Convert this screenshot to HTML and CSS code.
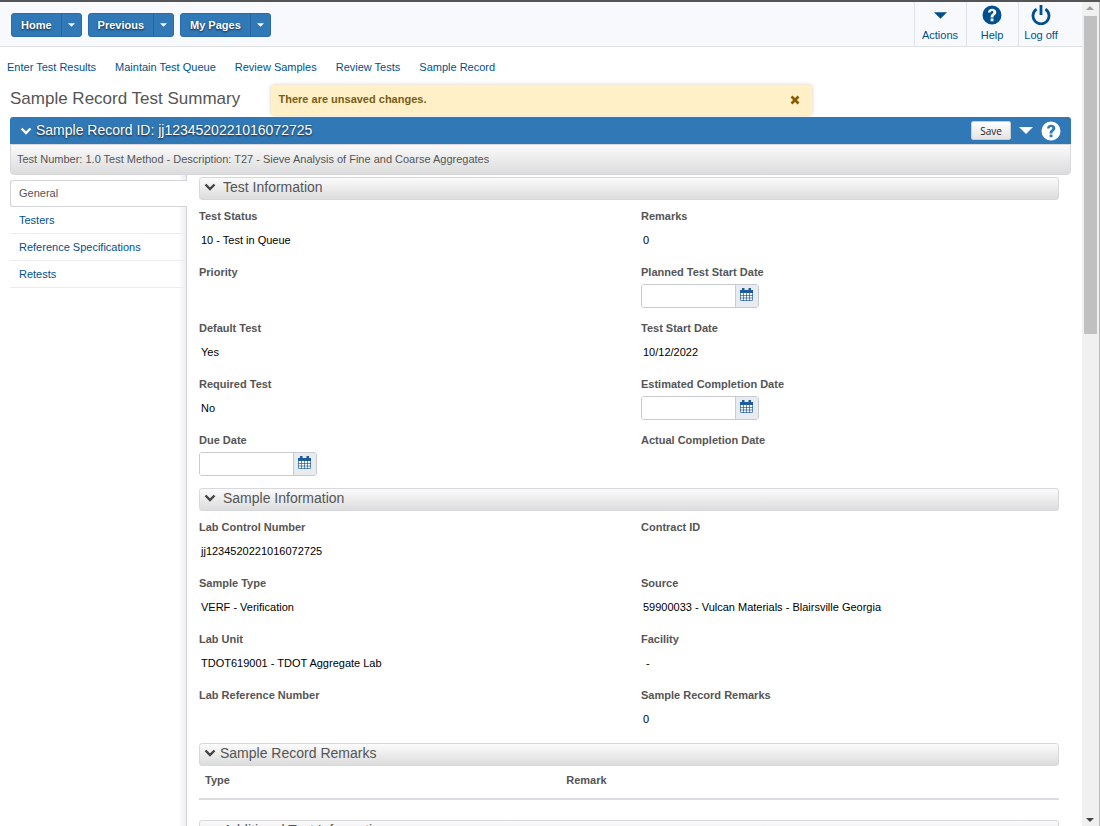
FILE: index.html
```
<!DOCTYPE html>
<html lang="en">

<head>
    <meta charset="utf-8">
    <meta name="viewport" content="width=device-width, initial-scale=1">
    <title>Sample Record Test Summary</title>
    <link rel="stylesheet" href="styles.css">
</head>

<body>
    <svg class="symbols">
        <symbol id="caret" viewBox="0 0 12 6">
            <path d="M0 0h12L6 6z" />
        </symbol>
        <symbol id="chevron" viewBox="0 0 12 8">
            <path d="M1.500 1.500l4.500 4.500 4.500-4.500" fill="none" stroke="currentColor" stroke-width="2.4" />
        </symbol>
        <symbol id="question" viewBox="0 0 20 20">
            <path fill-rule="evenodd" d="M10 .5a9.500 9.500 0 1 0 0 19a9.500 9.500 0 1 0 0-19zM8.600 13.500h2.900v2.800H8.600zM6 7.400C6.200 4.900 7.700 3.700 10.100 3.700c2.500 0 4.200 1.300 4.200 3.500 0 1.500-.8 2.300-1.800 3-.8.6-1 .9-1 2.200H8.600c0-2 .5-2.700 1.500-3.500.8-.6 1.200-.9 1.200-1.600 0-.7-.5-1.200-1.300-1.200-.9 0-1.300.5-1.400 1.500z" />
        </symbol>
        <symbol id="power" viewBox="0 0 20 20">
            <path d="M5.600 4.200a8 8 0 1 0 8.800 0M10 0v10" fill="none" stroke="currentColor" stroke-width="2.800" />
        </symbol>
        <symbol id="calendar" viewBox="0 0 13 13">
            <path fill="#fff" d="M0 4h13v9H0z" />
            <path d="M0 2h2V0h2.500v2h4V0H11v2h2v3H0z" />
            <path d="M.5 4v8.500h12V4M3.500 4v9M6.500 4v9M9.500 4v9M0 7.500h13M0 10h13" fill="none" stroke="currentColor" stroke-width=".7" />
        </symbol>
    </svg>

    <div class="page">
        <header class="topbar">
            <div class="menus">
                <div class="split-button">
                    <button type="button">Home</button>
                    <button type="button" class="drop" aria-label="Home menu"><svg><use href="#caret" /></svg></button>
                </div>
                <div class="split-button">
                    <button type="button">Previous</button>
                    <button type="button" class="drop" aria-label="Previous menu"><svg><use href="#caret" /></svg></button>
                </div>
                <div class="split-button">
                    <button type="button">My Pages</button>
                    <button type="button" class="drop" aria-label="My Pages menu"><svg><use href="#caret" /></svg></button>
                </div>
            </div>
            <div class="tools">
                <a href="#"><svg class="tool-caret"><use href="#caret" /></svg>Actions</a>
                <a href="#"><svg><use href="#question" /></svg>Help</a>
                <a href="#"><svg><use href="#power" /></svg>Log off</a>
            </div>
        </header>

        <nav class="quick-links">
            <a href="#">Enter Test Results</a>
            <a href="#">Maintain Test Queue</a>
            <a href="#">Review Samples</a>
            <a href="#">Review Tests</a>
            <a href="#">Sample Record</a>
        </nav>

        <div class="title-row">
            <h1>Sample Record Test Summary</h1>
            <div class="alert" role="alert">
                <span>There are unsaved changes.</span>
                <button type="button" aria-label="Close">
                    <svg viewBox="0 0 10 10"><path d="M1.500 1.500l7 7M8.500 1.500l-7 7" stroke="currentColor" stroke-width="2.600" /></svg>
                </button>
            </div>
        </div>

        <div class="record">
            <div class="record-head">
                <svg class="chevron"><use href="#chevron" /></svg>
                <h2>Sample Record ID: jj1234520221016072725</h2>
                <button type="button" class="save">Save</button>
                <button type="button" class="icon-button" aria-label="Record actions"><svg class="record-caret"><use href="#caret" /></svg></button>
                <button type="button" class="icon-button" aria-label="Record help"><svg class="record-help"><use href="#question" /></svg></button>
            </div>
            <div class="record-sub">Test Number: 1.0 Test Method - Description: T27 - Sieve Analysis of Fine and Coarse Aggregates</div>
        </div>

        <div class="body">
            <nav class="tabs">
                <a href="#" class="active">General</a>
                <a href="#">Testers</a>
                <a href="#">Reference Specifications</a>
                <a href="#">Retests</a>
            </nav>

            <main class="content">
                <section>
                    <h3><svg class="chevron"><use href="#chevron" /></svg>Test Information</h3>
                    <div class="fields">
                        <div class="field"><b>Test Status</b><span>10 - Test in Queue</span></div>
                        <div class="field"><b>Remarks</b><span>0</span></div>
                        <div class="field"><b>Priority</b></div>
                        <div class="field">
                            <label for="planned">Planned Test Start Date</label>
                            <div class="date"><input type="text" id="planned"><button type="button" aria-label="Pick planned test start date"><svg><use href="#calendar" /></svg></button></div>
                        </div>
                        <div class="field"><b>Default Test</b><span>Yes</span></div>
                        <div class="field"><b>Test Start Date</b><span>10/12/2022</span></div>
                        <div class="field"><b>Required Test</b><span>No</span></div>
                        <div class="field">
                            <label for="estimated">Estimated Completion Date</label>
                            <div class="date"><input type="text" id="estimated"><button type="button" aria-label="Pick estimated completion date"><svg><use href="#calendar" /></svg></button></div>
                        </div>
                        <div class="field">
                            <label for="due">Due Date</label>
                            <div class="date"><input type="text" id="due"><button type="button" aria-label="Pick due date"><svg><use href="#calendar" /></svg></button></div>
                        </div>
                        <div class="field"><b>Actual Completion Date</b></div>
                    </div>
                </section>

                <section>
                    <h3><svg class="chevron"><use href="#chevron" /></svg>Sample Information</h3>
                    <div class="fields">
                        <div class="field"><b>Lab Control Number</b><span>jj1234520221016072725</span></div>
                        <div class="field"><b>Contract ID</b></div>
                        <div class="field"><b>Sample Type</b><span>VERF - Verification</span></div>
                        <div class="field"><b>Source</b><span>59900033 - Vulcan Materials - Blairsville Georgia</span></div>
                        <div class="field"><b>Lab Unit</b><span>TDOT619001 - TDOT Aggregate Lab</span></div>
                        <div class="field"><b>Facility</b><span>&nbsp;-</span></div>
                        <div class="field"><b>Lab Reference Number</b></div>
                        <div class="field"><b>Sample Record Remarks</b><span>0</span></div>
                    </div>
                </section>

                <section>
                    <h3 class="tight"><svg class="chevron"><use href="#chevron" /></svg>Sample Record Remarks</h3>
                    <table class="remarks">
                        <thead>
                            <tr>
                                <th class="type">Type</th>
                                <th>Remark</th>
                            </tr>
                        </thead>
                    </table>
                </section>

                <section>
                    <h3><svg class="chevron"><use href="#chevron" /></svg>Additional Test Information</h3>
                </section>
            </main>
        </div>
    </div>

    <div class="scrollbar" aria-hidden="true">
        <svg class="up"><use href="#caret" /></svg>
        <div class="thumb"></div>
        <svg class="down"><use href="#caret" /></svg>
    </div>
</body>

</html>
```
FILE: styles.css
```
* {
    box-sizing: border-box;
}

body {
    margin: 0;
    display: flex;
    height: 100vh;
    overflow: hidden;
    border-top: 2px solid #555;
    background: #fff;
    color: #555;
    font-family: "Liberation Sans", Arial, sans-serif;
    font-size: 11px;
    line-height: 16px;
}

h1,
h2,
h3 {
    margin: 0;
    font-weight: normal;
}

a {
    color: #00508f;
    text-decoration: none;
}

button {
    font-family: inherit;
    font-size: 11px;
    cursor: pointer;
}

svg {
    display: block;
    fill: currentColor;
}

.symbols {
    display: none;
}

.page {
    flex: 1;
    min-width: 0;
    display: flex;
    flex-direction: column;
    overflow: hidden;
}

/* top bar */
.topbar {
    display: flex;
    flex: none;
    justify-content: space-between;
    height: 45px;
    background: #f7f9fc;
    border-bottom: 1px solid #dfe2e6;
}

.menus {
    display: flex;
    gap: 6px;
    padding: 11px;
}

.split-button {
    display: flex;
    height: 24px;
    border: 1px solid #2a6ba8;
    border-radius: 3px;
    background: #3178b6;
    overflow: hidden;
}

.split-button button {
    padding: 0 9px;
    border: 0;
    background: none;
    color: #fff;
    font-weight: bold;
    text-shadow: 0 1px 2px #123;
}

.split-button .drop {
    width: 20px;
    padding: 0 6px;
    border-left: 1px solid #2565a0;
}

.drop svg {
    width: 7px;
    height: 4px;
}

.tools {
    display: flex;
    padding-right: 16px;
}

.tools a {
    display: flex;
    flex-direction: column;
    align-items: center;
    gap: 2px;
    width: 52px;
    padding: 3px 1px 0 0;
    border-left: 1px solid #dfe2e6;
}

.tools a:last-child {
    width: 48px;
    padding-right: 3px;
}

.tools svg {
    width: 20px;
    height: 20px;
}

.tools .tool-caret {
    width: 13px;
    height: 7px;
    margin: 7px 0 6px;
}

.quick-links {
    display: flex;
    flex: none;
    gap: 19px;
    padding: 12px 7px 10px;
}

/* title and alert */
.title-row {
    display: grid;
    grid-template-columns: 1fr 2fr 1fr;
    flex: none;
    align-items: start;
    height: 30px;
    margin-bottom: 2px;
}

h1 {
    min-width: 0;
    padding-left: 10px;
    font-size: 17px;
    line-height: 28px;
    white-space: nowrap;
}

.alert {
    display: flex;
    justify-content: space-between;
    height: 30px;
    padding: 6px 10px 6px 8px;
    border-radius: 3px;
    background: #fff0c8;
    box-shadow: 0 0 4px #d8cfb8;
    color: #7a5c14;
    font-weight: bold;
}

.alert button {
    padding: 0 2px;
    border: 0;
    background: none;
    color: #8a5a00;
}

.alert svg {
    width: 10px;
    height: 10px;
}

/* record header */
.record {
    flex: none;
    margin: 0 11px 0 10px;
}

.record-head {
    display: flex;
    align-items: center;
    height: 27px;
    padding: 0 10px;
    border-radius: 3px 3px 0 0;
    background: #3178b6;
    color: #fff;
}

.chevron {
    width: 12px;
    height: 8px;
}

h2 {
    flex: 1;
    padding: 0 0 2px 4px;
    font-size: 14px;
    text-shadow: 0 1px 2px #123;
}

.save {
    width: 40px;
    height: 19px;
    padding: 0;
    border: 1px solid #ccc;
    border-radius: 2px;
    background: linear-gradient(#fff, #e4e4e4);
    color: #222;
    font-family: "Open Sans", sans-serif;
    font-size: 10px;
    line-height: 14px;
}

.icon-button {
    padding: 0;
    margin-left: 8px;
    border: 0;
    background: none;
    color: #fff;
}

.record-caret {
    width: 14px;
    height: 7px;
}

.record-help {
    width: 20px;
    height: 20px;
}

.record-sub {
    height: 31px;
    padding: 6px;
    border: 1px solid #d8d8dc;
    border-radius: 0 0 4px 4px;
    background: linear-gradient(#fafafa, #dcdcdc);
}

/* tabs */
.body {
    display: flex;
    flex: 1;
    padding-left: 10px;
}

.tabs {
    flex: none;
    width: 177px;
    padding-top: 5px;
    border-right: 1px solid #d4d4d8;
    background: linear-gradient(to left, #eee, #fff 8px);
}

.tabs a {
    display: block;
    height: 27px;
    padding: 5px 9px;
    border-bottom: 1px solid #ececf0;
}

.tabs .active {
    margin-right: -1px;
    padding: 4px 8px;
    border: 1px solid #d4d4d8;
    border-right: 0;
    border-radius: 3px 0 0 3px;
    background: #fff;
    color: #555;
}

/* sections */
.content {
    flex: 1;
    padding: 2px 23px 0 12px;
}

h3 {
    display: flex;
    align-items: center;
    gap: 7px;
    height: 23px;
    padding: 0 4px 3px;
    border: 1px solid #d8d8dc;
    border-radius: 3px;
    background: linear-gradient(#fbfbfb, #dcdcdc);
    font-size: 14px;
}

h3 .chevron {
    color: #444;
}

h3.tight {
    gap: 4px;
}

.fields {
    display: grid;
    grid-template-columns: 1fr 1fr;
    grid-auto-rows: 56px;
    column-gap: 24px;
    padding-top: 8px;
}

.field b,
.field label {
    display: block;
    font-weight: bold;
}

.field span {
    display: block;
    padding: 8px 2px 0;
    color: #000;
}

.date {
    display: flex;
    width: 118px;
    height: 24px;
    margin-top: 4px;
    border: 1px solid #c8ccd2;
    border-radius: 3px;
    background: #fff;
    overflow: hidden;
}

.date input {
    flex: 1;
    min-width: 0;
    padding: 0 4px;
    border: 0;
    font-size: 11px;
}

.date button {
    width: 23px;
    padding: 0 4px 3px;
    border: 0;
    border-left: 1px solid #c8ccd2;
    background: #e8ecf1;
    color: #1c5c98;
}

.date svg {
    width: 13px;
    height: 13px;
}

.remarks {
    width: 100%;
    margin-bottom: 20px;
    border-collapse: collapse;
    border-bottom: 2px solid #dcdce2;
}

.remarks th {
    height: 33px;
    padding: 6px 6px 0;
    text-align: left;
    vertical-align: top;
}

.remarks .type {
    width: 42%;
}

/* scrollbar */
.scrollbar {
    display: flex;
    flex: none;
    flex-direction: column;
    align-items: center;
    width: 18px;
    padding: 4px 1px 4px 0;
    border-right: 1px solid #b8b8b8;
    background: #f0f0f0;
    color: #444;
}

.scrollbar svg {
    width: 8px;
    height: 4px;
}

.scrollbar .up {
    color: #a0a0a0;
    transform: rotate(180deg);
}

.thumb {
    width: 13px;
    height: 39%;
    margin: 6px 0 auto;
    background: #c0c0c0;
}
```
